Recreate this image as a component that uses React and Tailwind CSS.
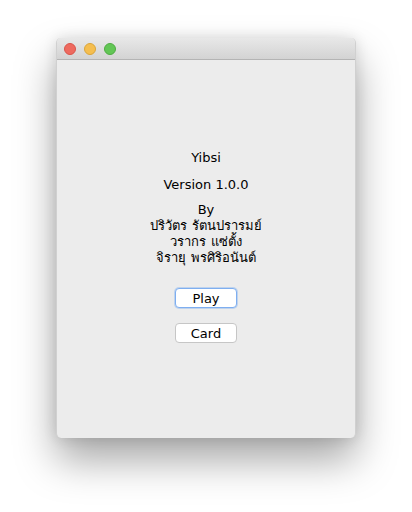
export default function App() {
  return (
    <div className="w-[412px] h-[512px] bg-white pt-[38px] pl-[56px] font-['Lucida_Grande','DejaVu_Sans','Noto_Sans',sans-serif] text-[13px] text-black">
      <div className="w-[300px] h-[400px] rounded-[5px] bg-[#ececec] flex flex-col overflow-hidden shadow-[0_22px_40px_rgba(0,0,0,0.35),0_0_14px_rgba(0,0,0,0.12)] border-x border-[#d0d0d0]">
        {/* title bar */}
        <div className="h-[22px] shrink-0 bg-gradient-to-b from-[#e8e8e8] to-[#d3d3d3] border-b border-[#b4b4b4] flex items-center gap-[8px] pl-[7px]">
          <span className="w-[12px] h-[12px] rounded-full bg-[#ee6a5f] border border-[#d9544a]" />
          <span className="w-[12px] h-[12px] rounded-full bg-[#f5be4f] border border-[#d9a53a]" />
          <span className="w-[12px] h-[12px] rounded-full bg-[#62c655] border border-[#4fab42]" />
        </div>

        <div className="flex flex-col items-center pt-[90px]">
          <div className="leading-[16px]">Yibsi</div>
          <div className="leading-[16px] mt-[11px]">Version 1.0.0</div>
          <div className="mt-[9px] text-center leading-[16px]">
            <div>By</div>
            <div>ปริวัตร รัตนปรารมย์</div>
            <div>วรากร แซ่ตั้ง</div>
            <div>จิรายุ พรศิริอนันต์</div>
          </div>

          <button className="mt-[22px] w-[62px] h-[20px] rounded-[4px] bg-white border border-[#7eaef0] shadow-[0_0_0_1px_rgba(126,174,240,0.4)] leading-none">
            Play
          </button>
          <button className="mt-[15px] w-[62px] h-[20px] rounded-[4px] bg-white border border-[#c6c6c6] leading-none">
            Card
          </button>
        </div>
      </div>
    </div>
  );
}
